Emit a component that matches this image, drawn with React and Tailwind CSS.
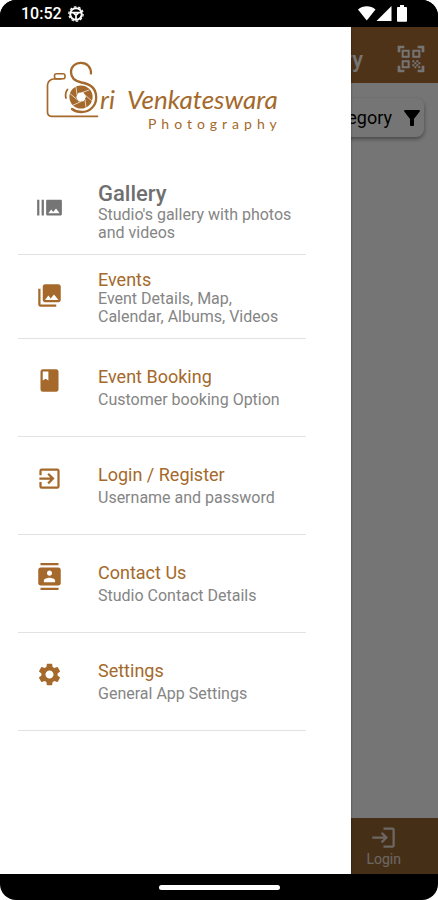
import React from "react";
import {
  MdBurstMode,
  MdClass,
  MdContacts,
  MdExitToApp,
  MdFilterAlt,
  MdOutlineLogin,
  MdOutlineQrCodeScanner,
  MdPhotoLibrary,
  MdSettings,
} from "react-icons/md";

const items = [
  { title: "Events", text: "Event Details, Map, Calendar, Albums, Videos", Icon: MdPhotoLibrary, tall: true },
  { title: "Event Booking", text: "Customer booking Option", Icon: MdClass },
  { title: "Login / Register", text: "Username and password", Icon: MdExitToApp },
  { title: "Contact Us", text: "Studio Contact Details", Icon: MdContacts },
  { title: "Settings", text: "General App Settings", Icon: MdSettings },
];

function StatusBar() {
  return (
    <div className="flex h-[27px] shrink-0 items-center justify-between bg-black pr-[30px] pl-[21px] text-white">
      <div className="flex items-center gap-1.5">
        <span className="text-base leading-5 font-medium">10:52</span>
        <svg className="size-4" viewBox="0 0 16 16" fill="none" stroke="currentColor" aria-hidden="true">
          <circle cx="8" cy="8" r="5.8" strokeWidth="2" />
          <circle cx="8" cy="8" r="7.2" strokeWidth="1.2" strokeDasharray="2.6 1.9" />
          <path d="M2.5 6.6h11M8 9v4.5M5.6 7l2.4 2.4L10.4 7" strokeWidth="1.7" />
        </svg>
      </div>
      <svg className="h-[17px] w-[50px]" viewBox="0 0 50 17" fill="currentColor" aria-hidden="true">
        <path d="M0 4.4C5 .3 12.500 .3 17.500 4.400L8.750 15.500z" />
        <path d="M33.500 1v15h-15z" />
        <path d="M42 0h4v2h2.200c.5 0 .8.300.8.800v13.200c0 .5-.3.800-.8.800h-8.400c-.5 0-.8-.3-.8-.8V2.800c0-.5.300-.8.800-.8H42z" />
      </svg>
    </div>
  );
}

function CameraMark() {
  return (
    <svg className="h-[57px] w-[54px] shrink-0" viewBox="46 61 54 57" fill="none" stroke="#a4692b" strokeLinecap="round" aria-hidden="true">
      <path d="M61 79h-7.500c-3 0-6 3-6 6v27c0 2.500 1.500 4.300 4 4.300H97.500" strokeWidth="1.700" />
      <rect x="54.500" y="73.800" width="10.500" height="5" rx="2" strokeWidth="1.600" />
      <path d="M91 73.500C91 67 87 62.800 81 62.800c-6 0-10 4.200-10 9.200 0 6 4.500 9.300 10.500 10.500C91 84 96.200 89.500 96.200 97.500c0 8-6 14.500-14.700 14.500-3.800 0-7-1-9.500-3" strokeWidth="2.300" />
      <path d="M67.500 89.500c-2 2.500-2.300 5.500-1.500 8.500" strokeWidth="1.800" />
      <circle cx="81" cy="97" r="7.800" strokeWidth="7.600" />
      <g stroke="#fff" strokeWidth="0.700">
        <path d="M81 93l8-3M85 95l6.500 5.500M85 99.500l1 8M81 101.500l-7.500 3.500M77 99.500l-6.500-5.500M77 95l-1-8" />
      </g>
      <path d="M78.500 92.800l5-.4 2.500 4.400-2.300 4.400-5 .3-2.500-4.400z" fill="#fff" stroke="none" />
    </svg>
  );
}

function Logo() {
  return (
    <div className="flex pt-[34px] pl-[46px] text-[#a4692b]">
      <CameraMark />
      <div className="flex flex-col pt-6 font-['Lato',sans-serif]">
        <span className="flex gap-3 text-[26px] leading-7 whitespace-nowrap italic">
          <span>ri</span>
          <span>Venkateswara</span>
        </span>
        <span className="mt-[3px] -mr-1 self-end text-sm leading-4 tracking-[5px]">Photography</span>
      </div>
    </div>
  );
}

function MenuItem({ title, text, Icon, tall, selected }) {
  return (
    <li className="border-b border-[#e2e2e2]">
      <a
        href="#"
        aria-current={selected ? "page" : undefined}
        className={`flex items-start gap-[35px] pr-2 pl-[18px] ${tall ? "pt-[15px] pb-3" : "pt-7 pb-[27px]"}`}
      >
        <Icon className={`size-[27px] shrink-0 ${tall ? "mt-3" : ""} ${selected ? "text-[#757575]" : "text-[#a4692b]"}`} />
        <span className={`flex flex-col ${tall ? "" : "gap-1"}`}>
          <span className={selected ? "text-[22px] leading-6 font-medium text-[#6f6f6f]" : "text-lg leading-5 text-[#a4692b]"}>
            {title}
          </span>
          <span className="text-base leading-[18px] text-[#858585]">{text}</span>
        </span>
      </a>
    </li>
  );
}

function Page() {
  return (
    <div className="flex flex-1 flex-col bg-white">
      <header className="flex h-14 items-center justify-end gap-8 bg-[#ad6f35] pt-2 pr-[11px] text-white">
        <h1 className="text-[22px] font-medium whitespace-nowrap">Gallery</h1>
        <button type="button" aria-label="Scan code">
          <MdOutlineQrCodeScanner className="size-8" />
        </button>
      </header>
      <main className="flex flex-1 flex-col items-end pt-[15px] pr-[14px]">
        <button type="button" className="flex h-[39px] items-center gap-2 rounded-lg bg-white pl-4 text-lg text-black shadow-[0_2px_4px_rgba(0,0,0,0.4)]">
          Category
          <MdFilterAlt className="size-6" />
        </button>
      </main>
      <footer className="flex h-14 justify-end bg-[#9a6634] pr-[37px] text-white/80">
        <a href="#" className="flex flex-col items-center pt-1.5">
          <MdOutlineLogin className="size-[27px]" />
          <span className="text-sm leading-4">Login</span>
        </a>
      </footer>
    </div>
  );
}

export default function App() {
  return (
    <div className="min-h-screen bg-white font-['Roboto',sans-serif]">
      <div className="flex min-h-screen flex-col overflow-hidden rounded-2xl bg-black">
        <StatusBar />
        <div className="relative flex flex-1 flex-col">
          <Page />
          <div className="absolute inset-0 bg-black/54" />
          <aside className="absolute inset-y-0 left-0 w-[351px] max-w-full bg-white shadow-[0_0_2px_rgba(0,0,0,0.5)]">
            <Logo />
            <nav className="mt-[35px] mr-[45px] ml-[18px]">
              <ul>
                <MenuItem title="Gallery" text="Studio's gallery with photos and videos" Icon={MdBurstMode} tall selected />
                {items.map((item) => (
                  <MenuItem key={item.title} {...item} />
                ))}
              </ul>
            </nav>
          </aside>
        </div>
        <div className="flex h-[26px] shrink-0 items-center justify-center">
          <div className="h-[5px] w-[121px] rounded-full bg-white" />
        </div>
      </div>
    </div>
  );
}
